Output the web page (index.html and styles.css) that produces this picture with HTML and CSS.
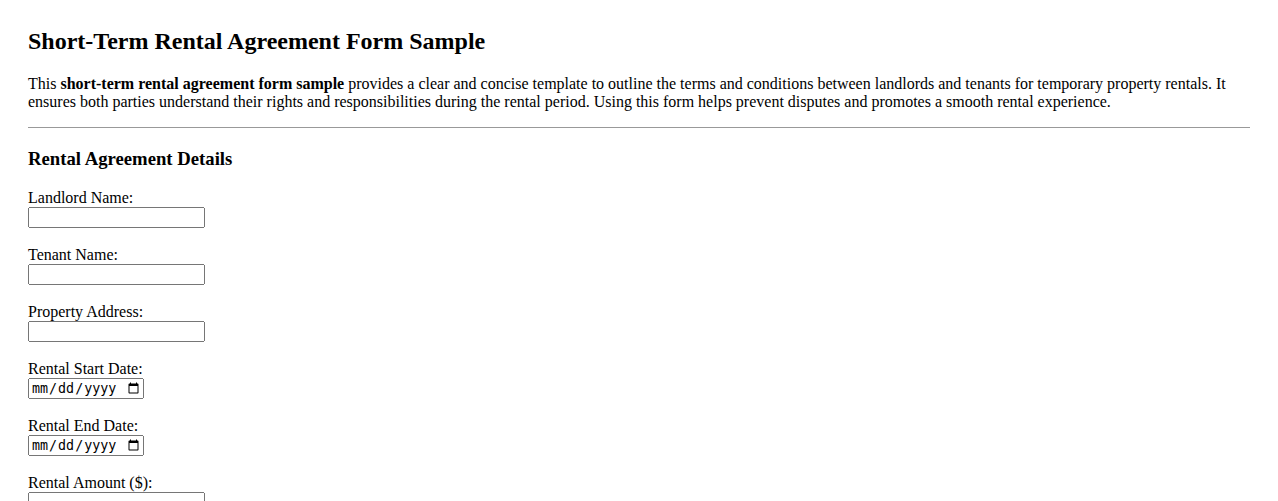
FILE: index.html
```html
<!DOCTYPE html>
<html lang="en">
<head>
    <meta charset="UTF-8">
    <meta name="viewport" content="width=device-width, initial-scale=1.0">
    <title>Short-Term Rental Agreement Form Sample</title>
    <link rel="stylesheet" href="styles.css">
</head>
<body>
    <h1>Short-Term Rental Agreement Form Sample</h1>
    <p class="intro">
        This <strong>short-term rental agreement form sample</strong> provides a clear and concise template to outline the terms and conditions between landlords and tenants for temporary property rentals. It ensures both parties understand their rights and responsibilities during the rental period. Using this form helps prevent disputes and promotes a smooth rental experience.
    </p>
    <hr>

    <form id="rentalForm">
        <h2>Rental Agreement Details</h2>

        <div class="form-group">
            <label for="landlord">Landlord Name:</label>
            <input type="text" id="landlord" name="landlord">
        </div>

        <div class="form-group">
            <label for="tenant">Tenant Name:</label>
            <input type="text" id="tenant" name="tenant">
        </div>

        <div class="form-group">
            <label for="address">Property Address:</label>
            <input type="text" id="address" name="address">
        </div>

        <div class="form-group">
            <label for="startDate">Rental Start Date:</label>
            <input type="date" id="startDate" name="startDate">
        </div>

        <div class="form-group">
            <label for="endDate">Rental End Date:</label>
            <input type="date" id="endDate" name="endDate">
        </div>

        <div class="form-group">
            <label for="amount">Rental Amount ($):</label>
            <input type="number" id="amount" name="amount">
        </div>
    </form>
</body>
</html>
```

FILE: styles.css
```css
body {
    font-family: 'Liberation Serif', 'Times New Roman', serif;
    font-size: 16px;
    margin: 0;
    padding: 20px 28px 20px 28px;
    color: #000;
}

h1 {
    font-size: 24px;
    line-height: 28px;
    margin: 7px 0 20px;
}

.intro {
    line-height: 18px;
    margin: 0 0 16px;
}

hr {
    border: none;
    border-top: 1px solid #999;
    margin: 0 0 20px;
}

h2 {
    font-size: 18.72px;
    margin: 0 0 19px;
}

.form-group {
    margin-bottom: 18px;
}

label {
    display: block;
    line-height: 18px;
}

input {
    box-sizing: border-box;
    height: 21px;
    width: 177px;
}

input[type="date"] {
    width: 116px;
}
```
